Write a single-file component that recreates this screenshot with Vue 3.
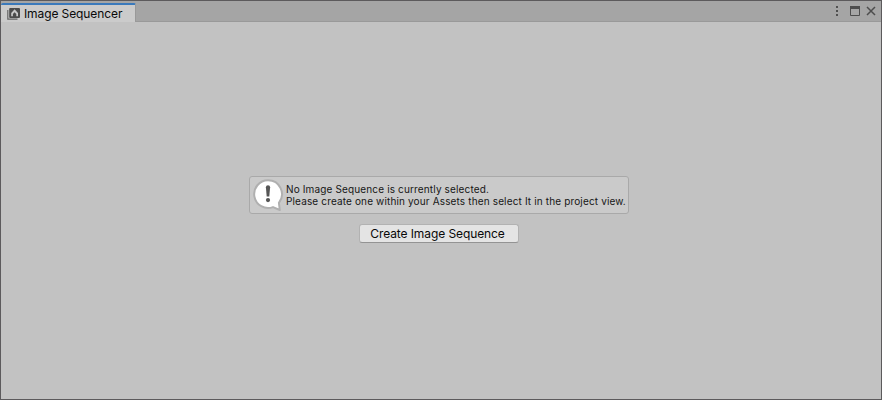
<script setup>
const title = 'Image Sequencer'
const message = [
  'No Image Sequence is currently selected.',
  'Please create one within your Assets then select It in the project view.',
]
</script>

<template>
  <div class="window">
    <header class="tabbar">
      <div class="tab">
        <svg class="tab-icon" width="14" height="14" viewBox="0 0 14 14">
          <path d="M0.8 3V12.2H10.5" fill="none" stroke="#666" stroke-width="1.2" />
          <rect x="2.2" y="0.9" width="10.8" height="10" rx="1" fill="#4c4c4c" />
          <path d="M4.2 9.2V6L7.6 2.2L11 6V9.2H9.3V7L7.6 5.2L5.9 7V9.2Z" fill="#c8c8c8" />
        </svg>
        <span class="tab-title">{{ title }}</span>
      </div>
      <div class="controls">
        <svg width="46" height="16" viewBox="0 0 46 16">
          <g fill="#505050">
            <rect x="4" y="3" width="2" height="2" />
            <rect x="4" y="7" width="2" height="2" />
            <rect x="4" y="11" width="2" height="2" />
          </g>
          <path d="M18.5 4V12.5H27.5V4" fill="none" stroke="#4d4d4d" />
          <rect x="18" y="3" width="10" height="3" fill="#4d4d4d" />
          <path d="M35 4L43 12M43 4L35 12" fill="none" stroke="#4d4d4d" stroke-width="1.5" />
        </svg>
      </div>
    </header>
    <main class="content">
      <div class="helpbox">
        <svg class="bubble" width="32" height="34" viewBox="0 0 32 34">
          <path
            d="M16 2.2A13.9 13.9 0 1 0 21 29.1L27.8 32L26.9 24.8A13.9 13.9 0 0 0 16 2.2Z"
            fill="#fff" stroke="#b0b0b0" stroke-width="2" stroke-linejoin="round"
          />
          <path d="M13.9 9.2Q13.9 7.2 16 7.2Q18.1 7.2 18.1 9.2L17.3 18.4H14.7Z" fill="#555" />
          <circle cx="16" cy="22.1" r="2.1" fill="#555" />
        </svg>
        <div class="message">
          <p v-for="line in message" :key="line">{{ line }}</p>
        </div>
      </div>
      <button class="create" type="button">Create Image Sequence</button>
    </main>
  </div>
</template>

<style>
body {
  margin: 0;
  background: #c2c2c2;
}
</style>

<style scoped>
.window {
  box-sizing: border-box;
  display: flex;
  flex-direction: column;
  width: 882px;
  height: 400px;
  overflow: hidden;
  border: 1px solid #5c5a5c;
  background: #c2c2c2;
  color: #090909;
  font-family: Inter, "Liberation Sans", sans-serif;
}
.tabbar {
  box-sizing: border-box;
  display: flex;
  justify-content: space-between;
  height: 21px;
  background: #a5a5a5;
  border-bottom: 1px solid #999;
}
.tab {
  box-sizing: border-box;
  display: flex;
  width: 135px;
  height: 19px;
  margin-top: 2px;
  padding: 1px 0 0 5px;
  border-top: 2px solid #3a79bb;
  border-right: 1px solid #999;
  border-radius: 2px 2px 0 0;
  background: #cbcbcb;
}
.tab-icon {
  flex: none;
  margin: 1px 0 0 1px;
}
.tab-title {
  margin-left: 3px;
  font-size: 12px;
  line-height: 16px;
  letter-spacing: -0.1px;
  white-space: nowrap;
}
.controls {
  display: flex;
  padding: 2px 3px 0 0;
}
.content {
  display: flex;
  flex-direction: column;
  align-items: center;
  padding: 154px 4px 0 0;
}
.helpbox {
  box-sizing: border-box;
  display: flex;
  width: 380px;
  height: 38px;
  padding: 0 2px;
  border: 1px solid #a9a9a9;
  border-radius: 3px;
  background: #cacaca;
}
.bubble {
  flex: none;
  margin-top: 1px;
}
.message {
  padding: 6px 0 0 2px;
  color: #161616;
  font-size: 10px;
  line-height: 12px;
  letter-spacing: 0.145px;
  white-space: nowrap;
}
.message p {
  margin: 0;
}
.create {
  box-sizing: border-box;
  width: 160px;
  height: 19px;
  margin-top: 10px;
  padding: 0 3px 0 0;
  border: 1px solid #b2b2b2;
  border-bottom-color: #939393;
  border-radius: 3px;
  background: #e4e4e4;
  color: #090909;
  font-family: inherit;
  font-size: 12px;
  line-height: 17px;
  letter-spacing: -0.09px;
  white-space: nowrap;
}
</style>
